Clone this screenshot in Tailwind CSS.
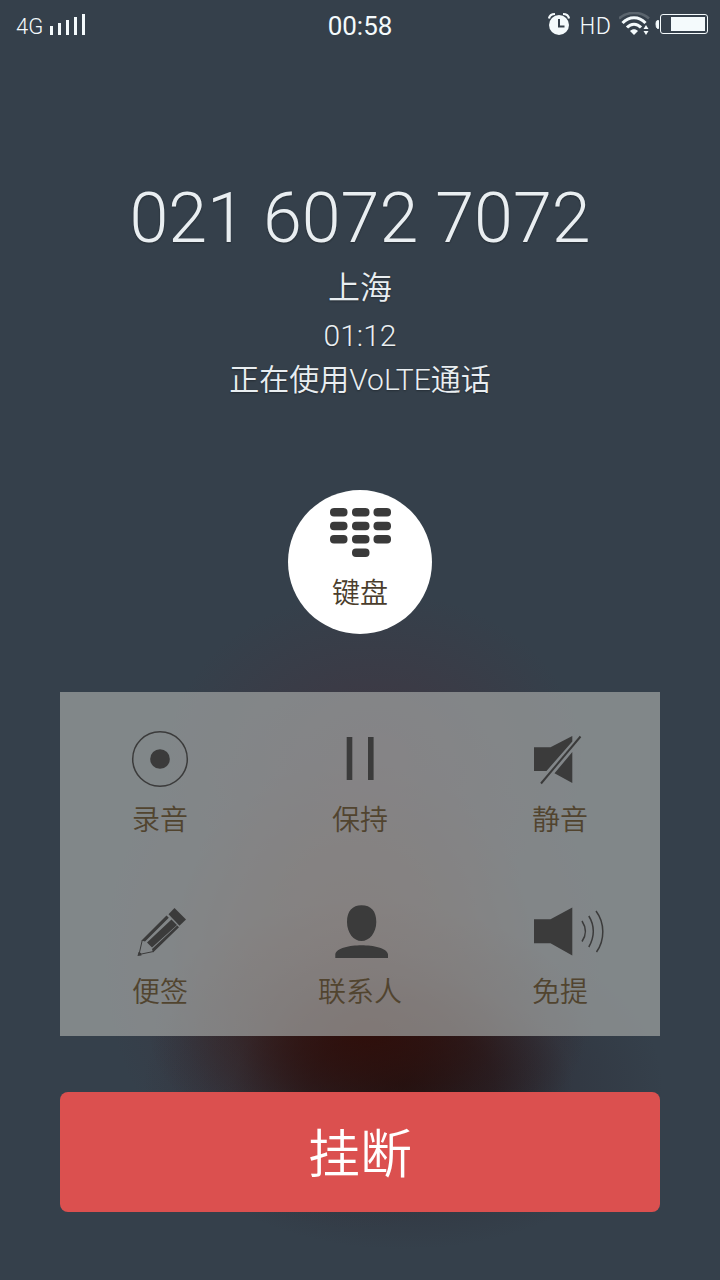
<!DOCTYPE html>
<html lang="zh-CN">
<head>
<meta charset="utf-8">
<meta name="viewport" content="width=device-width, initial-scale=1">
<title>通话中</title>
<script src="https://cdn.jsdelivr.net/npm/@tailwindcss/browser@4"></script>
</head>
<body class="min-h-screen bg-[#35404b] font-['Roboto','Noto_Sans_CJK_SC',sans-serif] font-[350] text-[#e9eef1]">
<div class="flex min-h-screen flex-col bg-[radial-gradient(ellipse_220px_130px_at_51%_1030px,#300c07d9_0%,#300c0799_30%,#300c0740_62%,#300c0700_100%),radial-gradient(ellipse_260px_165px_at_56%_1085px,#1c1213e6_0%,#20161ab3_35%,#2c2a3359_65%,#35404b00_100%),radial-gradient(ellipse_250px_270px_at_49%_960px,#4a201ab3_0%,#48252080_40%,#40303833_75%,#35404b00_100%),radial-gradient(ellipse_210px_170px_at_52%_760px,#50303a80_0%,#48303b59_40%,#35404b00_100%)]">

  <header class="grid h-12 grid-cols-3 items-center px-3 font-normal text-[#f4fafc]">
    <div class="flex items-end gap-1.5 pl-1 pt-1">
      <span class="text-[22px] leading-6 font-[350]">4G</span>
      <svg class="mb-1 h-[21px] w-9" viewBox="0 0 36 21" fill="currentColor" aria-hidden="true"><path d="M1 12h3v9H1zM9 9h3v12H9zM17 6h3v15h-3zM25 3h3v18h-3zM33 0h3v21h-3z"/></svg>
    </div>
    <time class="pt-1 text-center text-[26px] leading-8">00:58</time>
    <div class="flex items-center justify-end gap-2">
      <svg class="h-6 w-6" viewBox="0 0 24 24" aria-hidden="true"><circle cx="12" cy="13" r="10" fill="currentColor"/><path d="M2 6.500C2.500 3.500 4.500 2 8 2M22 6.500C21.500 3.500 19.500 2 16 2" fill="none" stroke="currentColor" stroke-width="2.200"/><path d="M12 7v7.500h5.500" fill="none" stroke="#35404b" stroke-width="2"/></svg>
      <span class="font-['Noto_Sans_CJK_SC',sans-serif] text-[23px] leading-8 font-light">HD</span>
      <svg class="-mr-1 h-6 w-8" viewBox="0 0 32 24" fill="none" stroke="currentColor" aria-hidden="true"><path d="M0 6.500C8 -1 22 -1 30 6.500" stroke-width="2.500" opacity=".2"/><path d="M3.500 11C10 4 20 4 26.500 11M8 15.500c4-4.500 10-4.500 14 0" stroke-width="3"/><path d="M11 19c2.500-2.500 5.500-2.500 8 0l-4 4zM24.500 17l2.500-4 2.500 4zM24.500 19l2.500 4 2.500-4z" fill="currentColor" stroke="none"/></svg>
      <svg class="h-6 w-[53px]" viewBox="0 0 53 24" aria-hidden="true"><path d="M3.500 8.500H2.500Q1 8.500 1 12t1.500 4.500h1z" fill="currentColor" stroke="currentColor"/><rect x="5.500" y="2.500" width="47" height="19" rx="2.500" fill="none" stroke="currentColor"/><rect x="16" y="5" width="34" height="14" fill="currentColor"/></svg>
    </div>
  </header>

  <main class="flex grow flex-col px-[60px] pt-[126px]">
    <section class="flex flex-col items-center text-center [text-shadow:0_1px_2px_#0005]">
      <h1 class="text-[70px] leading-[88px] font-light whitespace-nowrap">021 6072 7072</h1>
      <p class="mt-1 text-[32px] leading-[44px]">上海</p>
      <time class="mt-2 text-[30px] leading-[36px] font-light">01:12</time>
      <p class="mt-1 text-[30px] leading-[44px]">正在使用<span class="font-light">VoLTE</span>通话</p>
    </section>

    <button type="button" class="mt-[88px] flex size-36 shrink-0 flex-col items-center self-center rounded-full bg-white pt-[18px] text-[28px] leading-9 text-[#4a3d2c]">
      <svg class="h-[50px] w-[60px] overflow-visible text-[#3a3a3a]" viewBox="0 0 60 50" fill="currentColor" aria-hidden="true">
        <g id="keys"><rect x="0" y="0" width="17.500" height="8.500" rx="4"/><rect x="22" y="0" width="17.500" height="8.500" rx="4"/><rect x="43.500" y="0" width="17.500" height="8.500" rx="4"/></g>
        <use href="#keys" y="13.700"/><use href="#keys" y="27"/>
        <rect x="22" y="40.500" width="17.500" height="8.500" rx="4"/>
      </svg>
      <span class="mt-[18px]">键盘</span>
    </button>

    <section class="mt-[58px] grid grid-cols-3 bg-[#a3a5a4]/70 text-[28px] leading-9 text-[#51442f]">
      <button type="button" class="flex h-[172px] flex-col items-center pt-9">
        <svg class="size-[60px] text-[#3b3b3b]" viewBox="0 0 60 60" aria-hidden="true"><circle cx="30" cy="31" r="27.300" fill="none" stroke="currentColor" stroke-width="1.500"/><circle cx="30" cy="31" r="9.800" fill="currentColor"/></svg>
        <span class="mt-[15px]">录音</span>
      </button>
      <button type="button" class="flex h-[172px] flex-col items-center pt-9">
        <svg class="size-[60px] text-[#3b3b3b]" viewBox="0 0 60 60" fill="currentColor" aria-hidden="true"><path d="M16.700 9h5.600v43h-5.600zM38 9h5.600v43H38z"/></svg>
        <span class="mt-[15px]">保持</span>
      </button>
      <button type="button" class="flex h-[172px] flex-col items-center pt-9">
        <svg class="size-[60px] text-[#3b3b3b]" viewBox="0 0 60 60" fill="currentColor" aria-hidden="true"><path d="M4 19.300h16.500L42.300 8v5.500L16.500 43H4zM42.300 24v31L24.500 45.300z"/><path d="M11 55.500L50.500 8.500" stroke="currentColor" stroke-width="2"/></svg>
        <span class="mt-[15px]">静音</span>
      </button>
      <button type="button" class="flex h-[172px] flex-col items-center pt-9">
        <svg class="size-[60px] text-[#3b3b3b]" viewBox="0 0 60 60" fill="currentColor" aria-hidden="true">
          <path d="M44.500 8L56 19.500l-6.500 6.200L38.500 14.200z"/>
          <path d="M36.500 15.500l2.300 2.300L15 41.500l-3.500-1zM41.500 19.500l5.500 5.500L22 47.500l-5-5zM47.200 25.500l1.800 1.800L23 52.500l-1-3.500z"/>
          <path d="M12.300 40L9 54.500l14.500-3" fill="none" stroke="currentColor" stroke-width="1"/><path d="M8.500 52l2.500 1 .5 2.500-4 .5z"/>
        </svg>
        <span class="mt-[15px]">便签</span>
      </button>
      <button type="button" class="flex h-[172px] flex-col items-center pt-9">
        <svg class="size-[60px] text-[#3b3b3b]" viewBox="0 0 60 60" fill="currentColor" aria-hidden="true"><path d="M31.500 5.300C41 5.300 46.300 11 46.300 22c0 11-7 19-14.800 19S17 33 17 22C17 11 22.500 5.300 31.500 5.300zM5.300 58v-3.500C6 48 20 45.300 31.500 45.300S57.500 48 58 54.500V58z"/></svg>
        <span class="mt-[15px]">联系人</span>
      </button>
      <button type="button" class="flex h-[172px] flex-col items-center pt-9">
        <svg class="size-[60px] overflow-visible text-[#3b3b3b]" viewBox="0 0 60 60" fill="currentColor" aria-hidden="true"><path d="M4 19.300h16.500L42.300 7.500v48L20.500 43.300H4z"/><path d="M52 21c4.500 7 4.500 14 0 20.500M58.800 16c6 9.500 6 21 0 31M66 11c9 12 9 29 .5 41" fill="none" stroke="currentColor" stroke-width="1.500"/></svg>
        <span class="mt-[15px]">免提</span>
      </button>
    </section>

    <button type="button" class="mt-14 mb-[68px] h-[120px] shrink-0 rounded-lg bg-[#db504f] pt-2 text-[52px] leading-[72px] text-white">挂断</button>
  </main>
</div>
</body>
</html>
